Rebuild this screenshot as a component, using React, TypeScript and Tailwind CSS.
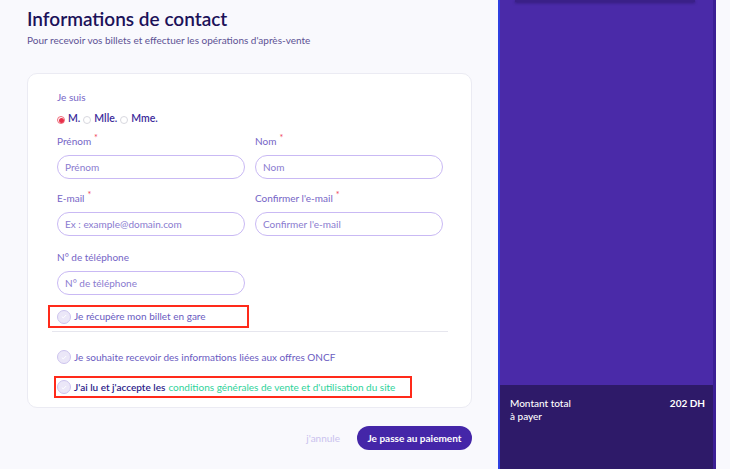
import React from "react";

const font = { fontFamily: "Lato, 'Noto Sans', sans-serif" };

function Check() {
  return (
    <span className="flex h-[14px] w-[14px] shrink-0 items-center justify-center rounded-full border border-[#cdc4ee] bg-[#ebe7f8]">
      <svg width="6" height="5" viewBox="0 0 6 5">
        <path d="M0.8 2.6 L2.3 3.9 L5.2 1" fill="none" stroke="#ffffff" strokeWidth="1" />
      </svg>
    </span>
  );
}

function Field({ label, ph, req }: { label: string; ph: string; req?: boolean }) {
  return (
    <div className="flex flex-col">
      <div className="flex h-[14px] items-center text-[10px] text-[#7565c6]">
        {label}
        {req && <span className="relative -top-[3px] ml-[3px] text-[9px] text-[#f0455a]">*</span>}
      </div>
      <div className="mt-[7px] flex h-[24px] items-center rounded-full border border-[#c9b9f4] bg-white pl-[7px] text-[10px] text-[#8a7bcf]">
        {ph}
      </div>
    </div>
  );
}

export default function App() {
  return (
    <div className="flex h-[469px] w-[730px] overflow-hidden bg-[#f9f9fd]" style={font}>
      <main className="flex w-[498px] flex-col pl-[27px] pr-[26px]">
        <h1 className="mt-[6px] text-[19px] font-semibold leading-[26px] text-[#1c1259]">Informations de contact</h1>
        <p className="mt-[1px] text-[10px] leading-[14px] text-[#5d5294]">
          Pour recevoir vos billets et effectuer les opérations d'après-vente
        </p>
        <section className="mt-[26px] flex flex-col rounded-[10px] border border-[#ebebf3] bg-white pl-[29px] pr-[28px] pt-[16px] pb-[9px]">
          <div className="flex h-[14px] items-center text-[10px] text-[#7565c6]">Je suis</div>
          <div className="mt-[8px] flex h-[14px] items-center text-[10.5px] font-semibold text-[#3b2a9a]">
            <span className="mt-[2px] flex h-[8px] w-[8px] items-center justify-center rounded-full border border-[#f06a78] bg-white">
              <span className="h-[5px] w-[5px] rounded-full bg-[#e8304a]" />
            </span>
            <span className="ml-[3px]">M.</span>
            <span className="ml-[3px] mt-[2px] h-[8px] w-[8px] rounded-full border border-[#d8d8df]" />
            <span className="ml-[3px]">Mlle.</span>
            <span className="ml-[3px] mt-[2px] h-[8px] w-[8px] rounded-full border border-[#d8d8df]" />
            <span className="ml-[3px]">Mme.</span>
          </div>
          <div className="mt-[8px] grid grid-cols-2 gap-x-[10px]">
            <Field label="Prénom" ph="Prénom" req />
            <Field label="Nom" ph="Nom" req />
          </div>
          <div className="mt-[12px] grid grid-cols-2 gap-x-[10px]">
            <Field label="E-mail" ph="Ex : example@domain.com" req />
            <Field label="Confirmer l'e-mail" ph="Confirmer l'e-mail" req />
          </div>
          <div className="mt-[14px] grid grid-cols-2 gap-x-[10px]">
            <Field label="N° de téléphone" ph="N° de téléphone" />
          </div>
          <div className="-ml-[9px] mt-[10px] flex h-[23px] w-[201px] items-center gap-[3px] border-2 border-[#ff2a1a] pl-[7px] text-[10px] text-[#6a5bbf]">
            <Check />
            <span>Je récupère mon billet en gare</span>
          </div>
          <div className="-ml-[5px] mr-[-5px] mt-[3px] h-px bg-[#e6e6ee]" />
          <div className="mt-[17px] flex h-[16px] items-center gap-[3px] text-[10px] text-[#6a5bbf]">
            <Check />
            <span>Je souhaite recevoir des informations liées aux offres ONCF</span>
          </div>
          <div className="-ml-[3px] mt-[11px] flex h-[22px] w-[358px] items-center gap-[3px] border-2 border-[#ff2a1a] pl-[1px] text-[10px]">
            <Check />
            <span className="font-semibold text-[#2e1d8a]">J'ai lu et j'accepte les</span>
            <span className="text-[#2fd39a]">conditions générales de vente et d'utilisation du site</span>
          </div>
        </section>
        <div className="mt-[18px] flex items-center justify-end gap-[17px]">
          <span className="text-[10px] text-[#cac2ee]">j'annule</span>
          <button className="flex h-[24px] w-[115px] items-center justify-center rounded-full bg-[#4426a8] text-[10px] font-bold text-white">
            Je passe au paiement
          </button>
        </div>
      </main>
      <aside className="flex h-full w-[215px] flex-col border-l-2 border-l-[#2f3fe0] bg-[#4a2aa8]">
        <div className="flex flex-1 flex-col">
          <div className="ml-[15px] mr-[18px] h-[2px] bg-[#3a2088] shadow-[0_1px_3px_rgba(20,10,60,0.5)]" />
        </div>
        <div className="flex h-[84px] justify-between bg-[#2e1a69] pl-[10px] pr-[8px] pt-[12px] text-[10px] leading-[13px] text-white">
          <div className="font-medium">
            Montant total
            <br />à payer
          </div>
          <div className="font-bold">202 DH</div>
        </div>
      </aside>
      <div className="h-full w-[3px] bg-[#3b1f95]" />
    </div>
  );
}
